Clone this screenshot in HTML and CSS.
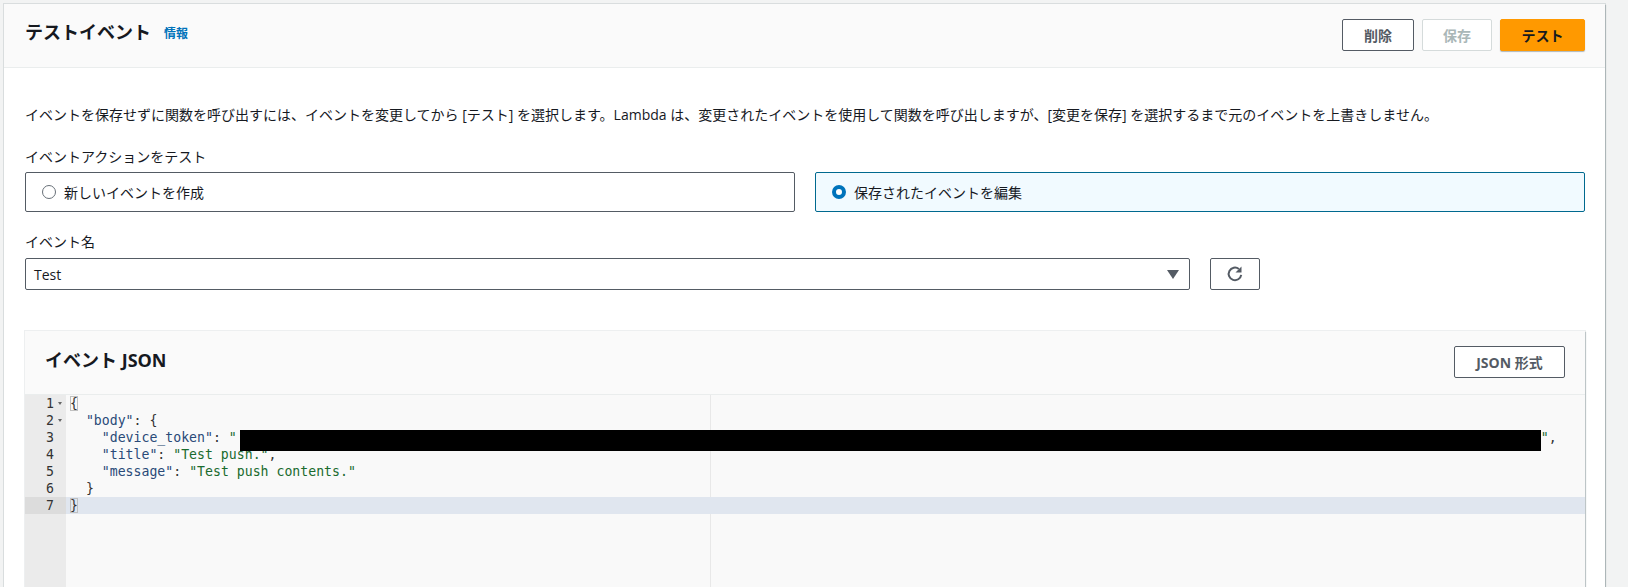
FILE: index.html
```html
<!DOCTYPE html>
<html lang="ja">
<head>
<meta charset="utf-8">
<title>テストイベント</title>
<link rel="stylesheet" href="styles.css">
</head>
<body>
<main class="panel">
  <header class="panel-head">
    <div class="title-wrap">
      <h1 class="title">テストイベント</h1>
      <a class="info" href="#">情報</a>
    </div>
    <div class="actions">
      <button class="btn">削除</button>
      <button class="btn btn-disabled">保存</button>
      <button class="btn btn-primary">テスト</button>
    </div>
  </header>
  <section class="panel-body">
    <p class="desc">イベントを保存せずに関数を呼び出すには、イベントを変更してから [テスト] を選択します。Lambda は、変更されたイベントを使用して関数を呼び出しますが、[変更を保存] を選択するまで元のイベントを上書きしません。</p>
    <div class="label label-action">イベントアクションをテスト</div>
    <div class="tiles">
      <div class="tile"><span class="radio"></span><span>新しいイベントを作成</span></div>
      <div class="tile tile-on"><span class="radio radio-on"></span><span>保存されたイベントを編集</span></div>
    </div>
    <div class="label label-name">イベント名</div>
    <div class="select-row">
      <div class="select"><span>Test</span><span class="caret"></span></div>
      <button class="icon-btn" aria-label="更新">
        <svg width="18" height="18" viewBox="0 0 18 18" fill="none"><path d="M15.2 9.800A6.300 6.300 0 1 1 12.900 4" stroke="#545b64" stroke-width="2"/><path d="M15.500 1.500v6h-6z" fill="#545b64"/></svg>
      </button>
    </div>
    <section class="card">
      <div class="card-head">
        <h2 class="card-title">イベント JSON</h2>
        <button class="btn btn-json">JSON 形式</button>
      </div>
      <div class="editor">
        <div class="gutter">
          <div class="gl">1<i class="fold"></i></div>
          <div class="gl">2<i class="fold"></i></div>
          <div class="gl">3</div>
          <div class="gl">4</div>
          <div class="gl">5</div>
          <div class="gl">6</div>
          <div class="gl gl-active">7</div>
        </div>
        <div class="code">
          <div class="margin-line"></div>
          <div class="ln"><span class="bracket">{</span></div>
          <div class="ln">  <span class="k">"body"</span>: {</div>
          <div class="ln">    <span class="k">"device_token"</span>: <span class="s">"</span><span class="redact"></span><span class="s">"</span>,</div>
          <div class="ln">    <span class="k">"title"</span>: <span class="s">"Test push."</span>,</div>
          <div class="ln">    <span class="k">"message"</span>: <span class="s">"Test push contents."</span></div>
          <div class="ln">  }</div>
          <div class="ln ln-active"><span class="bracket">}</span></div>
        </div>
      </div>
    </section>
  </section>
</main>
</body>
</html>
```
FILE: styles.css
```css
* { box-sizing: border-box; }
html, body { margin: 0; height: 100%; overflow: hidden; }
body {
  background: #f2f3f3;
  padding: 4px 23px 0 4px;
  font-family: "Open Sans", "Noto Sans CJK JP", sans-serif;
  font-size: 14px;
  color: #16191f;
}
.panel {
  background: #fff;
  height: 583px;
  overflow: hidden;
  box-shadow: 0 0 0 1px rgba(0,28,36,.1), 1px 1px 1px 0 rgba(0,28,36,.2);
}
.panel-head {
  height: 64px;
  background: #fafafa;
  border-bottom: 1px solid #eaeded;
  display: flex;
  align-items: flex-start;
  justify-content: space-between;
  padding: 15px 20px 0 21px;
}
.title-wrap { display: flex; align-items: center; gap: 13px; padding-top: 1px; }
.title { margin: 0; font-size: 18px; font-weight: 700; line-height: 24px; }
.info { color: #0073bb; font-size: 12px; font-weight: 700; text-decoration: none; line-height: 16px; margin-top: 3px; }
.actions { display: flex; gap: 8px; }
.btn {
  height: 32px;
  min-width: 72px;
  padding: 0 20px;
  background: #fff;
  border: 1px solid #545b64;
  border-radius: 2px;
  color: #545b64;
  font: 700 14px "Open Sans", "Noto Sans CJK JP", sans-serif;
}
.btn-disabled { border-color: #d5dbdb; color: #aab7b8; width: 70px; min-width: 0; }
.btn-primary { background: #ff9900; border-color: #ff9900; color: #16191f; width: 85px; box-shadow: 0 1px 1px rgba(0,28,36,.3); }
.panel-body { padding: 37px 20px 0 21px; }
.desc { margin: 0; line-height: 20px; height: 20px; white-space: nowrap; }
.label { line-height: 20px; }
.label-action { margin-top: 22px; }
.tiles { display: flex; gap: 20px; margin-top: 5px; }
.tile {
  flex: 1;
  height: 40px;
  display: flex;
  align-items: center;
  gap: 8px;
  padding: 0 16px;
  border: 1px solid #545b64;
  border-radius: 2px;
  background: #fff;
}
.tile-on { background: #f1faff; border-color: #00698f; }
.radio {
  width: 14px;
  height: 14px;
  border-radius: 50%;
  border: 1.5px solid #687078;
  background: #fff;
  flex: none;
}
.radio-on { border: 4px solid #0073bb; }
.label-name { margin-top: 20px; }
.select-row { display: flex; gap: 20px; margin-top: 6px; }
.select {
  width: 1165px;
  height: 32px;
  border: 1px solid #545b64;
  border-radius: 2px;
  padding: 0 10px 0 8px;
  display: flex;
  align-items: center;
  justify-content: space-between;
  background: #fff;
}
.caret { width: 0; height: 0; border-style: solid; border-width: 9px 6px 0; border-color: #545b64 transparent transparent; }
.icon-btn {
  width: 50px;
  height: 32px;
  padding: 0;
  display: flex;
  align-items: center;
  justify-content: center;
  background: #fff;
  border: 1px solid #545b64;
  border-radius: 2px;
}
.card {
  margin-top: 41px;
  background: #fafafa;
  height: 400px;
  box-shadow: 0 0 0 1px rgba(0,28,36,.07), 1px 1px 1px 0 rgba(0,28,36,.2);
}
.card-head {
  height: 64px;
  display: flex;
  align-items: flex-start;
  justify-content: space-between;
  padding: 15px 20px 0 20px;
  border-bottom: 1px solid #eaeded;
}
.card-title { margin: 2px 0 0; font-size: 18px; font-weight: 700; line-height: 24px; }
.btn-json { width: 111px; padding: 0; }
.editor { display: flex; height: 336px; font: 13.2px/17px "DejaVu Sans Mono", monospace; }
.gutter { width: 41px; background: #ebebeb; color: #333; flex: none; }
.gl { height: 17px; text-align: right; padding-right: 12px; position: relative; }
.gl-active { background: #dcdcdc; }
.fold {
  position: absolute;
  right: 4px;
  top: 7px;
  border-style: solid;
  border-width: 3px 2.5px 0;
  border-color: #666 transparent transparent;
}
.code { flex: 1; position: relative; padding-left: 4px; background: #f9f9f9; }
.margin-line { position: absolute; top: 0; bottom: 0; left: 644px; width: 1px; background: #e8e8e8; }
.ln { height: 17px; white-space: pre; color: #333; position: relative; }
.ln-active { background: #e0e6ef; margin-left: -4px; padding-left: 4px; }
.k { color: #2a4a78; }
.s { color: #1a6b2e; }
.bracket { outline: 1px solid #c0c0c0; outline-offset: -1px; }
.redact { display: inline-block; width: 1301px; height: 21px; background: #000; vertical-align: -5px; margin: -2px 0 -2px 3px; position: relative; top: 2px; z-index: 1; }
```
